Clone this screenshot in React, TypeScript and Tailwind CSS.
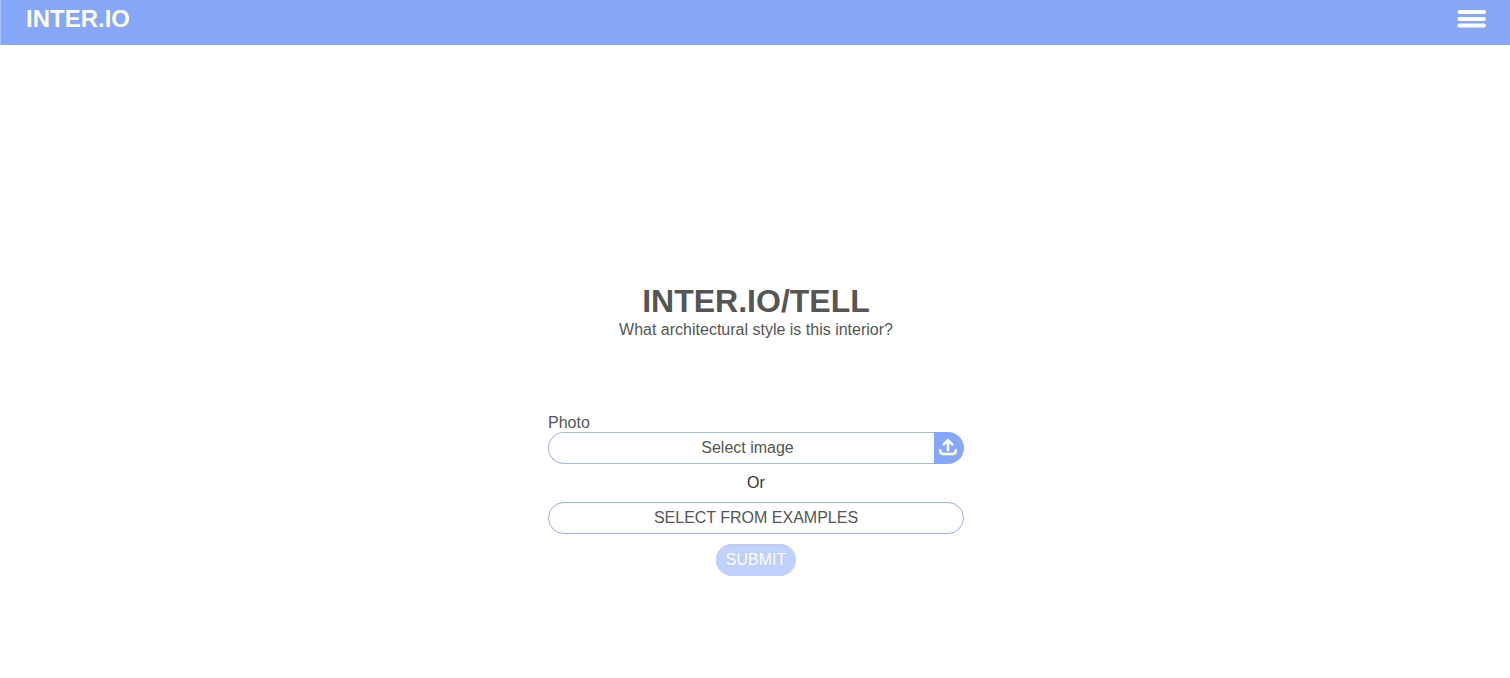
import React from "react";

function UploadIcon() {
  return (
    <svg
      viewBox="0 0 20 20"
      className="h-5 w-5 drop-shadow-[1px_1px_0_#a9a9c4]"
      fill="none"
      stroke="#f5fdff"
      strokeWidth="2.5"
      strokeLinecap="round"
      strokeLinejoin="round"
      aria-hidden="true"
    >
      <path d="M10 12V2.6M5.8 6.4 10 2.2l4.2 4.2" />
      <path d="M2.2 12.2c0 2.6.8 3.8 3.4 3.8h8.8c2.6 0 3.4-1.2 3.4-3.8" />
    </svg>
  );
}

function MenuIcon() {
  return (
    <svg
      viewBox="0 0 30 20"
      className="h-5 w-[30px] drop-shadow-[1px_1px_0_#a3a3b8]"
      fill="#f5fdff"
      aria-hidden="true"
    >
      <rect x="0.5" y="1" width="28.5" height="4" rx="2" />
      <rect x="0.5" y="8" width="28.5" height="4" rx="2" />
      <rect x="0.5" y="14.5" width="28.5" height="4" rx="2" />
    </svg>
  );
}

export default function App() {
  return (
    <div className="min-h-screen bg-white font-['Liberation_Sans',Arial,sans-serif] text-base text-[#555555]">
      <header className="flex items-start justify-between border-l border-[#a9bdf5] bg-[#87a7f9] pt-[3px] pr-[23px] pb-[10px] pl-[25px]">
        <a
          href="#"
          className="text-2xl font-bold text-[#f5fdff] [text-shadow:1px_1px_1px_#a3a3b8]"
        >
          INTER.IO
        </a>
        <button type="button" aria-label="Open menu" className="mt-[6px] flex">
          <MenuIcon />
        </button>
      </header>

      <main className="flex flex-col items-center pt-[236px] pr-4 pb-12 pl-[18px]">
        <h1 className="text-[32px] leading-10 font-bold">INTER.IO/TELL</h1>
        <p className="leading-[18px]">What architectural style is this interior?</p>

        <form
          className="mt-[75px] flex w-full max-w-[416px] flex-col items-center gap-[10px]"
          onSubmit={(event) => event.preventDefault()}
        >
          <div className="flex w-full flex-col">
            <label htmlFor="photo" className="leading-[18px]">
              Photo
            </label>
            <div className="flex h-8 w-full">
              <button
                type="button"
                id="photo"
                className="flex-1 rounded-l-full border border-r-0 border-[#adb9da] pl-3"
              >
                Select image
              </button>
              <button
                type="button"
                aria-label="Upload photo"
                className="flex w-[30px] items-center justify-center rounded-r-full bg-[#87a7f9] pr-[2px]"
              >
                <UploadIcon />
              </button>
            </div>
          </div>
          <p className="leading-[18px] text-[#333333]">Or</p>
          <button
            type="button"
            className="h-8 w-full rounded-full border border-[#9dafd6]"
          >
            SELECT FROM EXAMPLES
          </button>
          <button
            type="submit"
            disabled
            className="h-8 rounded-full bg-[#c0d1fd] px-[10px] text-[#f8fdff] shadow-[inset_1px_1px_1px_#c9c9d6] [text-shadow:1px_1px_1px_#c9c9d6]"
          >
            SUBMIT
          </button>
        </form>
      </main>
    </div>
  );
}
